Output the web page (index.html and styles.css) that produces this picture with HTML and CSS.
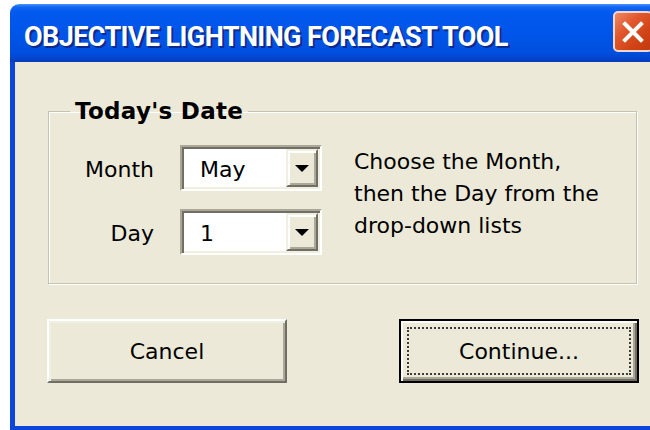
FILE: index.html
```html
<!DOCTYPE html>
<html lang="en">
<head>
<meta charset="utf-8">
<title>Objective Lightning Forecast Tool</title>
<link rel="stylesheet" href="styles.css">
</head>
<body>
<div class="window">
  <div class="titlebar">
    <span class="title">OBJECTIVE LIGHTNING FORECAST TOOL</span>
    <button class="close" type="button" aria-label="Close">
      <svg width="22" height="22" viewBox="0 0 22 22" aria-hidden="true">
        <path d="M3 3 L19 19 M19 3 L3 19" stroke="#fff" stroke-width="4" stroke-linecap="square" fill="none"/>
      </svg>
    </button>
  </div>
  <div class="client">
    <fieldset class="group">
      <legend>Today's Date</legend>
      <div class="group-body">
        <div class="fields">
          <label class="field-label">Month</label>
          <div class="combo">
            <span class="combo-value">May</span>
            <span class="combo-drop">
              <svg width="14" height="7" viewBox="0 0 14 7" aria-hidden="true"><polygon points="0,0 14,0 7,7" fill="#000"/></svg>
            </span>
          </div>
          <label class="field-label">Day</label>
          <div class="combo">
            <span class="combo-value">1</span>
            <span class="combo-drop">
              <svg width="14" height="7" viewBox="0 0 14 7" aria-hidden="true"><polygon points="0,0 14,0 7,7" fill="#000"/></svg>
            </span>
          </div>
        </div>
        <p class="hint">Choose the Month,<br>then the Day from the<br>drop-down lists</p>
      </div>
    </fieldset>
    <div class="actions">
      <button class="btn" type="button">Cancel</button>
      <button class="btn btn-default" type="button"><span class="focus-ring">Continue...</span></button>
    </div>
  </div>
</div>
</body>
</html>
```

FILE: styles.css
```css
html, body {
  margin: 0;
  height: 100%;
  overflow: hidden;
  background: #ffffff;
}

body {
  font-family: "DejaVu Sans", Verdana, sans-serif;
  font-size: 22px;
  color: #000;
}

/* Window frame */
.window {
  margin: 4px 0 0 10px;
  width: 648px;
  height: 426px;
  display: flex;
  flex-direction: column;
}

.titlebar {
  flex: none;
  height: 58px;
  box-sizing: border-box;
  display: flex;
  align-items: center;
  justify-content: space-between;
  padding: 8px 5px 0 14px;
  border-radius: 9px 9px 0 0;
  background: linear-gradient(#4a94ff 0, #1266f1 3px, #0259ee 8px, #0055e8 30px, #014fdf 48px, #0146d2 54px, #0a3cb8 58px);
}

.title {
  font-family: Roboto, "DejaVu Sans", sans-serif;
  font-weight: 700;
  font-size: 27px;
  letter-spacing: -0.6px;
  color: #fff;
  text-shadow: 2px 2px 0 #0b2a8c;
  white-space: nowrap;
}

.close {
  width: 40px;
  height: 41px;
  margin-top: -11px;
  padding: 0;
  display: flex;
  align-items: center;
  justify-content: center;
  border: 2px solid #f4d7cc;
  border-radius: 5px;
  background: linear-gradient(135deg, #ec8a66 0, #e2582d 35%, #d04316 70%, #c23a10 100%);
}

/* Client area */
.client {
  flex: 1;
  background: #ece9d8;
  border-left: 5px solid #0b45dc;
  border-bottom: 4px solid #0b45dc;
  padding-left: 32px;
}

/* Group box with etched border */
.group {
  margin: 36px 0 0 1px;
  padding: 0;
  width: 589px;
  box-sizing: border-box;
  border: 1px solid #c5c2b2;
  box-shadow: inset 1px 1px 0 #fff, 1px 1px 0 #fff;
}

.group legend {
  margin-left: 21px;
  padding: 0 5px;
  font-weight: 700;
  font-size: 23px;
  line-height: 26px;
  letter-spacing: 0.3px;
}

.group-body {
  display: flex;
  align-items: flex-start;
  padding: 21px 0 28px;
}

.fields {
  display: grid;
  grid-template-columns: 105px 142px;
  grid-auto-rows: 46px;
  column-gap: 26px;
  row-gap: 18px;
  align-items: center;
}

.field-label {
  text-align: right;
  padding-top: 3px;
}

/* Drop-down list */
.combo {
  height: 46px;
  box-sizing: border-box;
  display: flex;
  padding: 2px;
  border: 2px solid;
  border-color: #aca899 #fff #fff #aca899;
  box-shadow: inset 2px 2px 0 #716f64, inset -2px -2px 0 #f1efe2;
  background: #fff;
}

.combo-value {
  flex: 1;
  display: flex;
  align-items: center;
  padding-left: 16px;
  padding-top: 2px;
}

.combo-drop {
  width: 32px;
  box-sizing: border-box;
  display: flex;
  align-items: center;
  justify-content: center;
  background: #ece9d8;
  border: 2px solid;
  border-color: #f1efe2 #716f64 #716f64 #f1efe2;
  box-shadow: inset 2px 2px 0 #fff, inset -2px -2px 0 #aca899;
}

.hint {
  margin: 1px 0 0 32px;
  line-height: 32px;
}

/* Push buttons */
.actions {
  display: flex;
  justify-content: space-between;
  width: 592px;
  margin-top: 35px;
}

.btn {
  width: 240px;
  height: 64px;
  box-sizing: border-box;
  padding: 0;
  display: flex;
  align-items: center;
  justify-content: center;
  background: #ece9d8;
  font: inherit;
  color: #000;
  border: 2px solid;
  border-color: #fff #716f64 #716f64 #fff;
  box-shadow: inset 2px 2px 0 #f1efe2, inset -2px -2px 0 #aca899;
}

.btn-default {
  padding: 6px;
  border: 2px solid #000;
  box-shadow: inset 2px 2px 0 #fff, inset -2px -2px 0 #716f64, inset -4px -4px 0 #aca899;
}

.focus-ring {
  flex: 1;
  align-self: stretch;
  display: flex;
  align-items: center;
  justify-content: center;
  border: 2px dotted #3c3c3c;
}
```
